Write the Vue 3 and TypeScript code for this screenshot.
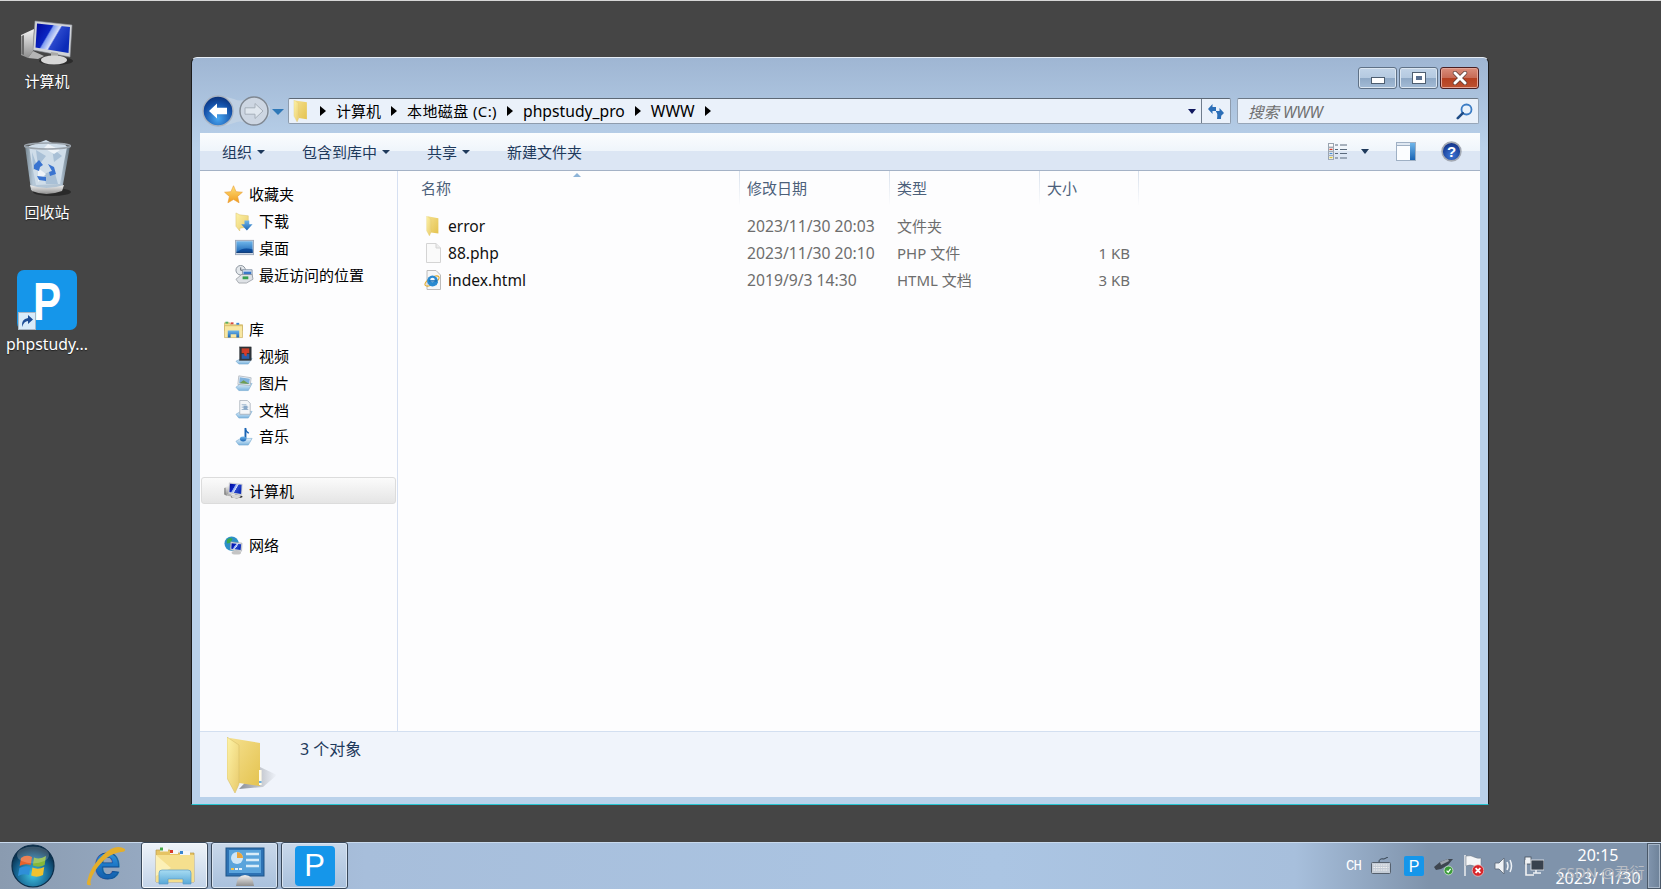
<script setup lang="ts">
interface NavItem { label: string; icon: string; head?: boolean; selected?: boolean }
interface FileRow { name: string; icon: string; date: string; type: string; size: string }
interface Crumb { text: string; kind: string }

const navGroups: NavItem[][] = [
  [
    { label: '收藏夹', icon: 'i-star', head: true },
    { label: '下载', icon: 'i-download' },
    { label: '桌面', icon: 'i-desk' },
    { label: '最近访问的位置', icon: 'i-recent' },
  ],
  [
    { label: '库', icon: 'i-lib', head: true },
    { label: '视频', icon: 'i-video' },
    { label: '图片', icon: 'i-pic' },
    { label: '文档', icon: 'i-doc' },
    { label: '音乐', icon: 'i-music' },
  ],
  [{ label: '计算机', icon: 'i-computer', head: true, selected: true }],
  [{ label: '网络', icon: 'i-net', head: true }],
]

const files: FileRow[] = [
  { name: 'error', icon: 'i-folder', date: '2023/11/30 20:03', type: '文件夹', size: '' },
  { name: '88.php', icon: 'i-file', date: '2023/11/30 20:10', type: 'PHP 文件', size: '1 KB' },
  { name: 'index.html', icon: 'i-html', date: '2019/9/3 14:30', type: 'HTML 文档', size: '3 KB' },
]

const crumbs: Crumb[] = [
  { text: '计算机', kind: '' },
  { text: '本地磁盘 (C:)', kind: 'crumb-mixed' },
  { text: 'phpstudy_pro', kind: 'crumb-latin' },
  { text: 'WWW', kind: 'crumb-latin' },
]
const tools: { label: string; arrow: boolean }[] = [
  { label: '组织', arrow: true },
  { label: '包含到库中', arrow: true },
  { label: '共享', arrow: true },
  { label: '新建文件夹', arrow: false },
]
</script>

<template>
  <div class="screen">
    <svg class="defs" width="0" height="0" aria-hidden="true">
      <defs>
        <linearGradient id="g-leaf" x1="0" y1="0" x2="1" y2="1">
          <stop offset="0" stop-color="#fdf3a8" /><stop offset="1" stop-color="#e9cb6c" />
        </linearGradient>
        <linearGradient id="g-back" x1="0" y1="0" x2="1" y2="1">
          <stop offset="0" stop-color="#f5e08e" /><stop offset="1" stop-color="#e4c350" />
        </linearGradient>
        <linearGradient id="g-shadow" x1="0" y1="0" x2="1" y2="0">
          <stop offset="0" stop-color="#8b8f96" /><stop offset="1" stop-color="#f0f4fb" />
        </linearGradient>
        <linearGradient id="g-screen" x1="0" y1="0" x2="1" y2="0.5">
          <stop offset="0" stop-color="#00069a" /><stop offset="0.42" stop-color="#0a25c2" />
          <stop offset="0.46" stop-color="#7f9cf0" /><stop offset="0.62" stop-color="#d5def8" />
          <stop offset="0.66" stop-color="#2a48cc" /><stop offset="1" stop-color="#0b2bb8" />
        </linearGradient>
        <linearGradient id="g-metal" x1="0" y1="0" x2="0" y2="1">
          <stop offset="0" stop-color="#f2f2f2" /><stop offset="1" stop-color="#8e8e8e" />
        </linearGradient>
        <linearGradient id="g-star" x1="0" y1="0" x2="0" y2="1">
          <stop offset="0" stop-color="#ffe27a" /><stop offset="1" stop-color="#f09a1c" />
        </linearGradient>
        <linearGradient id="g-blue" x1="0" y1="0" x2="0" y2="1">
          <stop offset="0" stop-color="#6fb6ea" /><stop offset="1" stop-color="#1a64b4" />
        </linearGradient>
        <linearGradient id="g-ie" x1="0" y1="0" x2="0" y2="1">
          <stop offset="0" stop-color="#58b6ec" /><stop offset="0.55" stop-color="#1c78c8" />
          <stop offset="1" stop-color="#0e4d96" />
        </linearGradient>
        <linearGradient id="g-base" x1="0" y1="0" x2="0" y2="1">
          <stop offset="0" stop-color="#e4f1fb" /><stop offset="1" stop-color="#7db5df" />
        </linearGradient>
        <linearGradient id="g-glass" x1="0" y1="0" x2="0" y2="1">
          <stop offset="0" stop-color="#a8dcf2" /><stop offset="1" stop-color="#58a8d8" />
        </linearGradient>
        <linearGradient id="g-bin" x1="0" y1="0" x2="1" y2="0">
          <stop offset="0" stop-color="#75858f" /><stop offset="0.18" stop-color="#b6c8d8" />
          <stop offset="0.8" stop-color="#b0c2d2" /><stop offset="1" stop-color="#5f6f7a" />
        </linearGradient>
        <radialGradient id="g-orb" cx="0.5" cy="0.7" r="0.62">
          <stop offset="0" stop-color="#3fc4e4" /><stop offset="0.65" stop-color="#16628f" />
          <stop offset="1" stop-color="#082c48" />
        </radialGradient>
        <radialGradient id="g-back-btn" cx="0.5" cy="0.75" r="0.7">
          <stop offset="0" stop-color="#49a8f2" /><stop offset="0.7" stop-color="#1450a8" />
          <stop offset="1" stop-color="#0c3680" />
        </radialGradient>
        <radialGradient id="g-help" cx="0.5" cy="0.7" r="0.7">
          <stop offset="0" stop-color="#3d78d8" /><stop offset="1" stop-color="#0f2d82" />
        </radialGradient>

        <symbol id="i-folder" viewBox="0 0 36 56">
          <path d="M3 1 L33 6 V49 L12 46Z" fill="url(#g-back)" />
          <path d="M0 0 L12 8 V47 L8 56 L0 41Z" fill="url(#g-leaf)" stroke="#d9bf6a" stroke-width=".6" />
        </symbol>
        <symbol id="i-file" viewBox="0 0 18 20">
          <path d="M2.5 .5 H12 L16.5 5 V19.5 H2.5Z" fill="#fafafa" stroke="#d4d4d4" />
          <path d="M12 .5 V5 H16.5" fill="#ececec" stroke="#d4d4d4" />
        </symbol>
        <symbol id="i-html" viewBox="0 0 18 20">
          <path d="M3 .5 H12 L16.5 5 V19.5 H3Z" fill="#f7f7f7" stroke="#bcbcbc" />
          <ellipse cx="8" cy="11" rx="8" ry="3.4" transform="rotate(-32 8 11)" fill="none" stroke="#e0a92a" stroke-width="1.1" />
          <circle cx="8.5" cy="11" r="5.4" fill="#2a8ad0" />
          <circle cx="8.5" cy="10" r="2.3" fill="#f2f8fd" />
          <rect x="5" y="10.2" width="8" height="1.5" fill="#1a6fb6" />
          <path d="M10 12 H14 L12.4 15.2 H8Z" fill="#2a8ad0" />
        </symbol>
        <symbol id="i-star" viewBox="0 0 20 20">
          <path d="M10 .8 L12.7 7 L19.4 7.6 L14.3 12 L15.9 18.8 L10 15.2 L4.1 18.8 L5.7 12 L.6 7.6 L7.3 7Z" fill="url(#g-star)" stroke="#e89a30" stroke-width=".6" />
        </symbol>
        <symbol id="i-download" viewBox="0 0 20 20">
          <path d="M1 1 L5 3 L14 4 V16 L5 17 L5 20 L1 15Z" fill="url(#g-leaf)" stroke="#d9bf6a" stroke-width=".5" />
          <path d="M10 9 H15 V13 H18.5 L12.5 19.5 L6.5 13 H10Z" fill="url(#g-blue)" />
        </symbol>
        <symbol id="i-desk" viewBox="0 0 20 16">
          <rect x=".5" y=".5" width="19" height="15" fill="#cdd6e2" stroke="#9eaabb" />
          <rect x="1.5" y="1.5" width="17" height="12" fill="url(#g-blue)" />
          <path d="M1.5 13.5 Q8 7 18.5 10 V13.5Z" fill="#0e4d9c" />
          <rect x="1.5" y="12.5" width="17" height="1.2" fill="#123e78" />
        </symbol>
        <symbol id="i-recent" viewBox="0 0 20 20">
          <circle cx="6" cy="5.5" r="5" fill="#e4e8ec" stroke="#8a929c" />
          <path d="M6 2.5 V5.5 H9" fill="none" stroke="#58606a" />
          <path d="M8 5 H18 V14 H8Z" fill="#d8e4f2" stroke="#8a98aa" />
          <path d="M9 7 H17 V12 H9Z" fill="#3a78c8" />
          <path d="M1 15 L7 10 H18 L19 15 L12 19 H4Z" fill="#dfe2e6" stroke="#868c94" stroke-width=".7" />
          <rect x="8" y="12" width="6" height="3" fill="#36a050" />
        </symbol>
        <symbol id="i-lib" viewBox="0 0 20 18">
          <path d="M.5 2 H6 L7 4 H19.5 V10 H.5Z" fill="#f3dd8a" stroke="#c9ad5e" stroke-width=".7" />
          <rect x="1.5" y="0.8" width="3" height="2" fill="#58b060" />
          <rect x="7" y="1.5" width="3" height="2" fill="#d84a3a" />
          <rect x="13" y="2" width="3" height="2" fill="#3a86d0" />
          <path d="M.5 5 H19.5 V17.5 H.5Z" fill="#f8e7a2" stroke="#c9ad5e" stroke-width=".7" />
          <path d="M4 10 H16 V17.5 H13 V14 H7 V17.5 H4Z" fill="url(#g-blue)" />
        </symbol>
        <symbol id="i-video" viewBox="0 0 20 20">
          <path d="M1 16 L7 13 H18 L14 19 H4Z" fill="url(#g-base)" stroke="#6fa6cf" stroke-width=".6" />
          <rect x="5" y="1" width="12" height="14" fill="#30363c" stroke="#1c2024" stroke-width=".5" />
          <rect x="7" y="2.5" width="8" height="5" fill="#c8402a" />
          <rect x="7" y="8.5" width="8" height="5" fill="#2b5da8" />
          <path d="M9 5 L13 4 L12 11 L10 10Z" fill="#d83a28" />
        </symbol>
        <symbol id="i-pic" viewBox="0 0 20 20">
          <path d="M1 15 L6 11 H18 L14 18.5 H4Z" fill="url(#g-base)" stroke="#6fa6cf" stroke-width=".6" />
          <path d="M4 3 L17 5 L16 13 L3 12Z" fill="#eef2f6" stroke="#8f9aa6" stroke-width=".6" />
          <path d="M5 4.5 L15.6 6 L15 11.6 L4.4 10.8Z" fill="#7eb1dc" />
          <path d="M4.6 10.8 L9 7.5 L15 11.6Z" fill="#6f9d54" />
        </symbol>
        <symbol id="i-doc" viewBox="0 0 20 20">
          <path d="M1 15 L6 12 H18 L14 19 H4Z" fill="url(#g-base)" stroke="#6fa6cf" stroke-width=".6" />
          <path d="M5 .5 H13 L16 3.5 V15 H5Z" fill="#f4f6f8" stroke="#98a2ae" stroke-width=".7" />
          <path d="M7 5 H12 M7 7.5 H14 M7 10 H14" stroke="#9ab3cc" />
          <rect x="9" y="6" width="4" height="4" fill="#88a8c8" />
        </symbol>
        <symbol id="i-music" viewBox="0 0 20 20">
          <path d="M1 15 L6 12 H18 L14 19 H4Z" fill="url(#g-base)" stroke="#6fa6cf" stroke-width=".6" />
          <path d="M11 1 V12" stroke="#1a64b4" stroke-width="2" />
          <path d="M11 1 Q12 4 15 6 L14 7 Q12 6 11 4Z" fill="#1a64b4" />
          <ellipse cx="8.6" cy="12.6" rx="3.4" ry="2.6" fill="url(#g-blue)" />
        </symbol>
        <symbol id="i-computer" viewBox="0 0 54 46">
          <ellipse cx="36" cy="41" rx="17" ry="4" fill="#2c2c2c" />
          <path d="M1 15 L14 9 L13 31 L8 38 L1 35Z" fill="url(#g-metal)" />
          <path d="M1.5 16 L4 15 V35 L1.5 34Z" fill="#6a6a6a" />
          <path d="M8 38 L13 31 L24 36 L18 39Z" fill="#b5b5b5" />
          <path d="M15 1 L52 5 L50 37 L13 30Z" fill="#d0d3d8" stroke="#8e9298" stroke-width=".6" />
          <path d="M17 3.5 L50 7 L48.5 33 L15.5 27.5Z" fill="url(#g-screen)" />
          <path d="M31 32 L38 33 L38 36 L31 36Z" fill="#a8a8a8" />
          <ellipse cx="34" cy="40" rx="13" ry="4.6" fill="#d6d6d6" />
        </symbol>
        <symbol id="i-net" viewBox="0 0 20 20">
          <circle cx="8" cy="8" r="7.5" fill="#2c8fc8" />
          <path d="M3 4 Q6 1 9 3 L7 7 L3 8Z M9 10 L13 12 L10 15 L8 13Z" fill="#38a850" />
          <path d="M7 6 L19 7.5 L18.5 16 L6.5 14.5Z" fill="#d8dbe0" stroke="#8e9298" stroke-width=".5" />
          <path d="M8 7.5 L18 8.7 L17.5 14.7 L7.7 13.3Z" fill="url(#g-screen)" />
          <ellipse cx="13" cy="17.5" rx="5" ry="2" fill="#c4c4c4" />
        </symbol>
      </defs>
    </svg>

    <main class="desktop">
      <div class="desk-icon icon-computer">
        <svg class="desk-pic pic-computer"><use href="#i-computer" /></svg>
        <span class="desk-label">计算机</span>
      </div>
      <div class="desk-icon icon-bin">
        <svg class="desk-pic pic-bin" viewBox="0 0 47 57">
          <ellipse cx="28" cy="52" rx="19" ry="4" fill="#2a2a2a" />
          <path d="M1 6 L7 50 Q22 56 38 50 L46 6Z" fill="url(#g-bin)" />
          <path d="M5 6 L14 3 L22 0 L28 3 L40 3 L43 7 L40 22 L36 44 L12 45 L8 25Z" fill="#cfdde9" />
          <path d="M12 10 L22 16 L14 26Z M28 8 L38 16 L30 22Z M20 34 L30 30 L34 44 L22 44Z M8 12 L13 26 L9 30Z" fill="#a9c0d6" />
          <path d="M24 4 L36 10 L30 14 L20 8Z M14 28 L22 34 L14 42Z" fill="#eef3f8" />
          <path d="M10 25 L15 20 L19 25 L16 27 L15 31 L10 29Z M24 24 L30 27 L32 34 L26 36 L25 32 L28 31Z M13 36 L22 37 L22 41 L15 40Z" fill="#3a74d0" />
          <path d="M6 45 Q22 51 40 45 L38 51 Q22 57 8 51Z" fill="url(#g-metal)" />
          <ellipse cx="23.5" cy="6" rx="23" ry="3" fill="none" stroke="#9aa2aa" stroke-width="1.6" />
        </svg>
        <span class="desk-label">回收站</span>
      </div>
      <div class="desk-icon icon-php">
        <div class="p-tile p-large">
          <span>P</span>
          <svg class="shortcut" viewBox="0 0 18 18">
            <rect x=".5" y=".5" width="17" height="17" fill="#d8ecfa" stroke="#a9b8c6" />
            <path d="M4 15 Q3 7 10 6 V3 L15 7.5 L10 12 V9 Q6 9 4 15Z" fill="#1d4e96" />
          </svg>
        </div>
        <span class="desk-label desk-latin">phpstudy...</span>
      </div>

      <section class="window">
        <header class="caption">
          <button class="cap-btn"><i class="glyph-min"></i></button>
          <button class="cap-btn"><i class="glyph-max"></i></button>
          <button class="cap-btn cap-close">
            <svg width="16" height="14" viewBox="0 0 16 14">
              <path d="M3 2 L13 12 M13 2 L3 12" stroke="#5a3a34" stroke-width="4.4" stroke-linecap="round" />
              <path d="M3 2 L13 12 M13 2 L3 12" stroke="#fff" stroke-width="3" stroke-linecap="round" />
            </svg>
          </button>
        </header>

        <div class="addr-row">
          <svg class="nav-btns" viewBox="0 0 88 36">
            <path d="M8 8 Q18 0 34 6 Q40 9 46 6 Q60 0 70 14 V22 Q60 36 46 30 Q40 27 34 30 Q18 36 8 28Z" fill="#c6d4e4" opacity=".75" />
            <circle cx="18" cy="18" r="15" fill="url(#g-back-btn)" stroke="#a9b4c2" stroke-width="1.4" />
            <path d="M9 18 L17 10.5 V14.8 H27 V21.2 H17 V25.5Z" fill="#fff" />
            <circle cx="54" cy="18" r="14" fill="#cdd6e2" stroke="#7f8791" stroke-width="1.4" />
            <path d="M63 18 L55 10.5 V14.8 H45 V21.2 H55 V25.5Z" fill="#dfe6ee" stroke="#a6afba" />
            <path d="M72 16 H84 L78 22Z" fill="#2e78b8" />
          </svg>
          <div class="addr">
            <div class="crumbs">
              <svg class="crumb-folder"><use href="#i-folder" /></svg>
              <template v-for="c in crumbs" :key="c.text">
                <i class="crumb-arrow"></i>
                <span :class="c.kind">{{ c.text }}</span>
              </template>
              <i class="crumb-arrow"></i>
            </div>
            <i class="addr-drop"></i>
            <div class="addr-refresh">
              <svg width="18" height="17" viewBox="0 0 18 17">
                <path d="M1 6 L5.5 1 L5.5 4 H9 V8 H5.5 V11Z" fill="#2c6fb8" />
                <path d="M17 10 L12.5 5 V8 H9 V9 Q11 10 10 16 H14 Q14 12 15 12Z" fill="#2c6fb8" />
              </svg>
            </div>
          </div>
          <div class="search">
            <span class="search-text">搜索 WWW</span>
            <svg width="17" height="17" viewBox="0 0 17 17">
              <circle cx="10.5" cy="6.5" r="5" fill="#eaf2fb" stroke="#3b7cc4" stroke-width="1.8" />
              <path d="M6.8 10.2 L1.8 15.2" stroke="#1f4c86" stroke-width="2.6" stroke-linecap="round" />
            </svg>
          </div>
        </div>

        <div class="toolbar">
          <div v-for="t in tools" :key="t.label" class="tool">
            <span>{{ t.label }}</span>
            <i v-if="t.arrow" class="tool-arrow"></i>
          </div>
          <div class="tool-right">
            <svg class="tool-view" width="20" height="17" viewBox="0 0 20 17">
              <rect x=".5" y=".5" width="5" height="3.6" fill="#fbfbfb" stroke="#9aa4b0" />
              <rect x=".5" y="4.6" width="5" height="3.6" fill="#fbfbfb" stroke="#9aa4b0" />
              <rect x="1.5" y="5.8" width="3" height="1.2" fill="#d83a2a" />
              <rect x=".5" y="8.7" width="5" height="3.6" fill="#fbfbfb" stroke="#9aa4b0" />
              <rect x="1.5" y="9.9" width="3" height="1.2" fill="#4a90d8" />
              <rect x=".5" y="12.8" width="5" height="3.6" fill="#fbfbfb" stroke="#9aa4b0" />
              <rect x="1.5" y="14" width="3" height="1.2" fill="#d8c83a" />
              <path d="M7 2 H10 M12 2 H19 M7 6.5 H10 M12 6.5 H19 M7 10.5 H10 M12 10.5 H19 M7 15 H10 M12 15 H19" stroke="#5a6a7c" />
            </svg>
            <i class="tool-arrow view-arrow"></i>
            <svg class="tool-pane" width="20" height="19" viewBox="0 0 20 19">
              <rect x=".5" y=".5" width="19" height="18" fill="#fbfdff" stroke="#9fb0c4" />
              <rect x=".5" y=".5" width="19" height="3" fill="#dfe8f2" stroke="#9fb0c4" />
              <rect x="14" y="1" width="5" height="17" fill="url(#g-blue)" />
            </svg>
            <svg class="tool-help" width="21" height="21" viewBox="0 0 21 21">
              <circle cx="10.5" cy="10.5" r="9.4" fill="url(#g-help)" stroke="#a3a9b3" stroke-width="1.6" />
              <text x="10.5" y="16" text-anchor="middle" class="help-q">?</text>
            </svg>
          </div>
        </div>

        <div class="panes">
          <aside class="nav">
            <div v-for="(g, i) in navGroups" :key="i" class="nav-group">
              <div
                v-for="n in g"
                :key="n.label"
                class="nav-row"
                :class="{ 'nav-head': n.head, 'nav-sel': n.selected }"
              >
                <svg class="nav-ico"><use :href="'#' + n.icon" /></svg>
                <span>{{ n.label }}</span>
              </div>
            </div>
          </aside>
          <div class="list">
            <i class="sort-arrow"></i>
            <div class="list-head">
              <div class="h-name">名称</div>
              <div class="h-cell">修改日期</div>
              <div class="h-cell">类型</div>
              <div class="h-cell h-last">大小</div>
            </div>
            <div v-for="f in files" :key="f.name" class="file-row">
              <div class="f-name">
                <svg class="f-ico"><use :href="'#' + f.icon" /></svg>
                <span>{{ f.name }}</span>
              </div>
              <div class="f-cell f-date">{{ f.date }}</div>
              <div class="f-cell">{{ f.type }}</div>
              <div class="f-size">{{ f.size }}</div>
            </div>
          </div>
        </div>

        <footer class="details">
          <svg class="detail-pic" viewBox="0 0 52 56">
            <path d="M33 30 L50 38 L36 50 L12 52Z" fill="url(#g-shadow)" />
            <use href="#i-folder" width="36" height="56" />
            <rect x="32" y="33" width="2.6" height="15" fill="#fffbe8" />
            <rect x="32" y="44" width="2.6" height="2" fill="#6fb0e0" />
          </svg>
          <span class="detail-text">3 个对象</span>
        </footer>
      </section>
    </main>

    <nav class="taskbar">
      <div class="start">
        <svg width="44" height="44" viewBox="0 0 44 44">
          <circle cx="22" cy="22" r="21" fill="url(#g-orb)" stroke="#0a2c48" stroke-width="1.2" />
          <path d="M10 14 Q15 10 21 13 L19.6 21 Q14 19 8.6 22Z" fill="#e8622a" />
          <path d="M23 13.5 Q29 16 35 12 L33.6 21 Q28 24 21.8 21.5Z" fill="#86b83a" />
          <path d="M8.4 24 Q14 21 19.2 23 L18 31 Q12 29 7 32Z" fill="#2f8fd8" />
          <path d="M21.4 23.5 Q27 26 33.2 23 L32 31 Q26 34 20.2 31.5Z" fill="#f0c22e" />
          <ellipse cx="22" cy="11" rx="16" ry="8.5" fill="#fff" opacity=".2" />
        </svg>
      </div>
      <div class="pin-ie">
        <svg class="ie-svg" viewBox="0 0 40 42">
          <text x="21" y="34" text-anchor="middle" class="ie-e">e</text>
          <path d="M39 4 Q30 -2 18 9 Q4 21 1 37 Q0 41 5 40 Q3 36 9 26 Q20 9 35 7 Q40 7 39 4Z" fill="#e3ae2c" />
        </svg>
      </div>
      <div class="task-btn task-active">
        <svg width="40" height="40" viewBox="0 0 40 40">
          <path d="M1 4 H15 L17 7 H39 V36 H1Z" fill="#e6c464" stroke="#b89a48" stroke-width=".7" />
          <rect x="5" y="1.5" width="8" height="4" fill="#f6f6f6" />
          <rect x="5" y="1.5" width="3" height="3" fill="#44a848" />
          <rect x="15" y="4" width="8" height="4" fill="#f6f6f6" />
          <rect x="15" y="4" width="3" height="3" fill="#d83a2a" />
          <rect x="25" y="5" width="10" height="4" fill="#f6f6f6" />
          <rect x="25" y="5" width="3" height="3" fill="#3a86d0" />
          <path d="M1 9 H39 V36 H1Z" fill="#f5df8e" />
          <path d="M1 9 L16 22 L1 30Z" fill="#fff6c8" opacity=".7" />
          <path d="M4 38 V27 Q4 24 7 24 H33 Q36 24 36 27 V38 H28 V33 H13 V38Z" fill="url(#g-glass)" stroke="#5a9bc8" stroke-width=".7" />
        </svg>
      </div>
      <div class="task-btn">
        <svg width="42" height="42" viewBox="0 0 42 42">
          <rect x="2" y="3" width="38" height="28" fill="#2d72b4" stroke="#1f5488" />
          <rect x="5" y="5" width="32" height="23" fill="#5aa4dc" />
          <circle cx="13" cy="13" r="6" fill="#cfe6f6" />
          <path d="M13 13 V7 A6 6 0 0 1 19 13Z" fill="#eba53c" />
          <path d="M22 9 H35 M22 15 H35 M22 21 H35" stroke="#d8ecf8" stroke-width="2.6" />
          <rect x="7" y="23" width="3" height="2" fill="#f4c24c" />
          <rect x="11" y="23" width="3" height="2" fill="#e6f2fa" />
          <rect x="15" y="23" width="3" height="2" fill="#e6f2fa" />
          <path d="M12 41 Q13 30 21 30 Q29 30 30 41Z" fill="url(#g-metal)" />
        </svg>
      </div>
      <div class="task-btn">
        <div class="p-tile p-task"><span>P</span></div>
      </div>

      <div class="tray">
        <span class="tray-ch">CH</span>
        <svg class="tray-kb" width="20" height="18" viewBox="0 0 20 18">
          <path d="M8 5 Q8 1 13 2 L17 0" fill="none" stroke="#33404e" />
          <rect x=".5" y="5.5" width="19" height="11" rx="1" fill="#c4ccd6" stroke="#56616e" />
          <path d="M2.5 8 H17.5 M2.5 10.5 H17.5 M2.5 13 H17.5" stroke="#f2f2f2" stroke-dasharray="1.6 .8" />
        </svg>
        <div class="p-tile p-tray"><span>P</span></div>
        <svg width="20" height="20" viewBox="0 0 20 20">
          <path d="M0 11 L6 6 L14 3 L19 3 L14 9 L7 13 L2 14Z" fill="#3e4650" />
          <path d="M6 6 L14 3 L15 5 L7 9Z" fill="#9aa2ac" />
          <circle cx="14.5" cy="14.5" r="4.4" fill="#3a9c3a" stroke="#e0ecd8" stroke-width=".7" />
          <path d="M12.6 14.6 L14.2 16.2 L16.6 12.8" fill="none" stroke="#fff" stroke-width="1.2" />
        </svg>
        <svg width="20" height="22" viewBox="0 0 20 22">
          <path d="M1 0 V21" stroke="#f4f4f4" stroke-width="1.4" />
          <path d="M2 1 Q7 0 10 2 Q14 4 17 3 V12 Q13 13 10 11 Q6 9 2 11Z" fill="#f4f6f8" stroke="#68727e" stroke-width=".5" />
          <circle cx="14" cy="15.5" r="5.8" fill="#d8252a" stroke="#f2c8c8" stroke-width=".7" />
          <path d="M11.6 13.1 L16.4 17.9 M16.4 13.1 L11.6 17.9" stroke="#fff" stroke-width="1.8" />
        </svg>
        <svg width="20" height="20" viewBox="0 0 20 20">
          <path d="M1 7 H5 L10 2 V18 L5 13 H1Z" fill="#eef2f6" stroke="#5a6674" stroke-width=".8" />
          <path d="M13 6 Q15 10 13 14 M16 4 Q19 10 16 16" fill="none" stroke="#eef2f6" stroke-width="1.5" />
        </svg>
        <svg width="20" height="20" viewBox="0 0 20 20">
          <rect x="1" y="1" width="6" height="7" fill="#eef2f6" stroke="#46505c" stroke-width=".8" />
          <path d="M2 4 V19 H10" fill="none" stroke="#f2f2f2" stroke-width="1.6" />
          <rect x="7" y="4" width="13" height="10" fill="#39424e" stroke="#e8ecf0" stroke-width=".8" />
          <path d="M12 14 V17 H9 H17" stroke="#eef2f6" stroke-width="1.6" fill="none" />
        </svg>
        <div class="clock">
          <span>20:15</span>
          <span>2023/11/30</span>
          <em class="mark">CSDN @君衍</em>
        </div>
        <div class="show-desk"></div>
      </div>
    </nav>
  </div>
</template>

<style>
html, body { margin: 0; background: #454545; }
</style>

<style scoped>
.screen {
  width: 1661px;
  height: 889px;
  display: flex;
  flex-direction: column;
  overflow: hidden;
  font-family: "Noto Sans", "Noto Sans CJK SC", sans-serif;
  font-size: 15px;
  color: #000;
}
.defs { position: absolute; }
.desktop {
  position: relative;
  flex: 1;
  background: #454545;
  border-top: 1px solid #d6d6d6;
}
.desk-icon {
  position: absolute;
  left: 0;
  width: 94px;
  display: flex;
  flex-direction: column;
  align-items: center;
}
.icon-computer { top: 19px; }
.icon-bin { top: 139px; }
.icon-php { top: 269px; }
.desk-pic { display: block; }
.pic-computer { width: 54px; height: 46px; }
.pic-bin { width: 47px; height: 57px; }
.desk-label {
  color: #fff;
  line-height: 20px;
  margin-top: 5px;
  text-shadow: 0 1px 1px #222;
}
.icon-php .desk-label { margin-top: 4px; }
.desk-latin { font-size: 15.8px; }
.p-tile {
  position: relative;
  background: #1596ea;
  color: #fff;
  font-family: "Liberation Sans", sans-serif;
  display: flex;
  align-items: center;
  justify-content: center;
}
.p-tile span { display: block; }
.p-large { width: 60px; height: 60px; border-radius: 7px; font-size: 54px; line-height: 56px; font-weight: 700; }
.p-large span { margin-top: 1px; transform: scaleX(0.78); }
.shortcut { position: absolute; left: 1px; bottom: 0; width: 18px; height: 18px; }
.p-task { width: 40px; height: 40px; border-radius: 4px; font-size: 31px; line-height: 36px; }
.p-tray { width: 20px; height: 20px; border-radius: 2px; font-size: 16px; line-height: 17px; margin-left: 2px; }

.window {
  position: absolute;
  left: 191px;
  top: 56px;
  width: 1298px;
  height: 748px;
  box-sizing: border-box;
  display: flex;
  flex-direction: column;
  padding: 0 8px 7px;
  border: 1px solid #1c1c1c;
  border-top-color: #e6edf5;
  border-bottom-color: #25c4cf;
  border-radius: 6px 6px 0 0;
  background: linear-gradient(#9fb6d3, #b9d1ea 90px);
}
.caption {
  height: 40px;
  flex: none;
  display: flex;
  justify-content: flex-end;
  align-items: flex-start;
  gap: 2px;
  padding: 9px 1px 0 0;
  box-sizing: border-box;
}
.cap-btn {
  width: 39px;
  height: 22px;
  padding: 0;
  box-sizing: border-box;
  display: flex;
  align-items: center;
  justify-content: center;
  border: 1px solid #5f7186;
  border-radius: 3px;
  background: linear-gradient(#c2d4e8 0, #b4c9e0 50%, #8fa9c6 52%, #a4bcd6 100%);
  box-shadow: inset 0 0 0 1px #dbe6f1;
}
.cap-close {
  border-color: #4a1f22;
  background: linear-gradient(#da8e7c 0, #c76a55 50%, #b54021 52%, #bd5231 100%);
  box-shadow: inset 0 0 0 1px #e4a597;
}
.glyph-min {
  display: block;
  width: 12px;
  height: 5px;
  margin-top: 5px;
  background: #fff;
  border: 1px solid #4e5e70;
}
.glyph-max {
  display: block;
  width: 12px;
  height: 10px;
  background: #5a7090;
  border: 3px solid #fff;
  outline: 1px solid #4e5e70;
  box-sizing: border-box;
}

.addr-row {
  height: 26px;
  flex: none;
  display: flex;
  gap: 6px;
  padding-right: 1px;
}
.nav-btns { width: 88px; height: 36px; margin: -5px -6px -5px 0; flex: none; }
.addr {
  flex: 1;
  display: flex;
  align-items: center;
  box-sizing: border-box;
  border: 1px solid #8e9cad;
  border-top-color: #5d6875;
  border-radius: 2px;
  background: #eaf1fa;
  min-width: 0;
}
.crumbs { flex: 1; display: flex; align-items: center; gap: 10px; padding-left: 3px; line-height: 20px; white-space: nowrap; }
.crumb-folder { width: 18px; height: 22px; }
.crumb-latin { font-size: 15.7px; }
.crumb-mixed { letter-spacing: .4px; }
.crumb-arrow {
  width: 0;
  height: 0;
  border-left: 6px solid #000;
  border-top: 5px solid transparent;
  border-bottom: 5px solid transparent;
}
.addr-drop {
  width: 0;
  height: 0;
  margin-right: 5px;
  border-top: 5px solid #10185e;
  border-left: 4.5px solid transparent;
  border-right: 4.5px solid transparent;
}
.addr-refresh {
  width: 28px;
  height: 100%;
  display: flex;
  align-items: center;
  justify-content: center;
  border-left: 1px solid #6f7c8c;
}
.search {
  width: 242px;
  flex: none;
  box-sizing: border-box;
  display: flex;
  align-items: center;
  justify-content: space-between;
  padding: 0 5px 0 10px;
  border: 1px solid #97a6b8;
  border-top-color: #6c7886;
  border-radius: 2px;
  background: #eaf1fa;
}
.search-text { color: #6e6e6e; font-style: italic; font-size: 15.5px; }

.toolbar {
  height: 38px;
  flex: none;
  margin-top: 9px;
  box-sizing: border-box;
  display: flex;
  align-items: center;
  gap: 37px;
  padding-left: 22px;
  border-bottom: 1px solid #a4b2c6;
  background: linear-gradient(#fbfdfe 0, #eff5fb 48%, #dce6f4 50%, #dce6f4 100%);
  color: #1e395b;
}
.tool { display: flex; align-items: center; gap: 5px; line-height: 20px; }
.tool-arrow {
  display: block;
  width: 0;
  height: 0;
  border-top: 4px solid #1e395b;
  border-left: 4px solid transparent;
  border-right: 4px solid transparent;
}
.tool-right { margin-left: auto; display: flex; align-items: center; padding-right: 18px; }
.view-arrow { margin-left: 13px; border-top-width: 5px; }
.tool-pane { margin-left: 27px; }
.tool-help { margin-left: 25px; }
.help-q { font: 700 15px "Liberation Sans", sans-serif; fill: #fff; }

.panes { flex: 1; display: flex; min-height: 0; background: #fdfdfe; }
.nav {
  width: 198px;
  flex: none;
  box-sizing: border-box;
  padding: 10px 1px 0 1px;
  border-right: 1px solid #d6e0f2;
}
.nav-group + .nav-group { margin-top: 27.6px; }
.nav-row {
  height: 26.8px;
  box-sizing: border-box;
  display: flex;
  align-items: center;
  gap: 5px;
  padding-left: 34px;
  line-height: 20px;
  white-space: nowrap;
}
.nav-head { padding-left: 23px; gap: 6px; }
.nav-sel {
  border: 1px solid #dcdcdc;
  border-radius: 3px;
  padding-left: 22px;
  background: linear-gradient(#fbfbfb, #e5e5e5);
}
.nav-ico { width: 19px; height: 19px; flex: none; }

.list { position: relative; flex: 1; min-width: 0; }
.sort-arrow {
  position: absolute;
  left: 175px;
  top: 2px;
  width: 0;
  height: 0;
  border-bottom: 4px solid #8db4d8;
  border-left: 4.5px solid transparent;
  border-right: 4.5px solid transparent;
}
.list-head, .file-row { display: grid; grid-template-columns: 341px 150px 150px 100px; }
.list-head { height: 30px; margin-bottom: 11px; color: #4c607a; line-height: 34px; }
.h-name { padding-left: 23px; }
.h-cell {
  padding-left: 7px;
  border-left: 1px solid;
  border-image: linear-gradient(#d6dfeb, #ffffff00) 1;
}
.h-last { border-right: 1px solid; }
.file-row { height: 27.2px; align-items: center; line-height: 20px; color: #6d6d6d; white-space: nowrap; }
.f-name { display: flex; align-items: center; gap: 6px; padding-left: 26px; color: #111; font-size: 15.6px; }
.f-ico { width: 18px; height: 20px; flex: none; }
.f-cell { padding-left: 8px; }
.f-date { font-size: 15.7px; }
.f-size { text-align: right; padding-right: 9px; }

.details {
  height: 66px;
  flex: none;
  box-sizing: border-box;
  display: flex;
  align-items: flex-start;
  padding: 5px 0 0 27px;
  border-top: 1px solid #d3dff0;
  background: #f0f4fb;
}
.detail-pic { width: 52px; height: 56px; flex: none; }
.detail-text { margin-left: 21px; margin-top: 1px; color: #1e395b; font-size: 16px; line-height: 22px; }

.taskbar {
  height: 47px;
  flex: none;
  box-sizing: border-box;
  display: flex;
  align-items: center;
  border-top: 1px solid #c8d9ec;
  background: linear-gradient(90deg, #8a9bb0 0, #a7bedb 22%, #abc5e3 60%, #a7bfdc 78%, #7f93ab 86%, #7f93ab 100%);
}
.start { width: 66px; display: flex; justify-content: center; flex: none; }
.pin-ie { width: 75px; display: flex; justify-content: center; padding-left: 4px; box-sizing: border-box; flex: none; }
.ie-svg { width: 40px; height: 42px; overflow: visible; }
.task-btn {
  width: 67px;
  height: 47px;
  margin-right: 3px;
  margin-top: -1px;
  flex: none;
  box-sizing: border-box;
  display: flex;
  align-items: center;
  justify-content: center;
  border: 1px solid #39485a;
  border-radius: 3px;
  background: linear-gradient(#c9d8ea, #a9c1dd);
  box-shadow: inset 0 0 0 1px #d9e5f2;
}
.task-active { background: linear-gradient(#eef3f9, #c2d3e8); box-shadow: inset 0 0 0 1px #f4f8fc; }
.tray { margin-left: auto; display: flex; align-items: center; gap: 10px; height: 100%; color: #fff; }
.tray-ch { font: 14px/20px "Liberation Mono", monospace; width: 16px; margin-right: -1px; letter-spacing: -1px; }
.tray-kb { margin-right: 1px; }
.clock {
  position: relative;
  width: 98px;
  margin-left: -5px;
  height: 100%;
  display: flex;
  flex-direction: column;
  align-items: center;
  justify-content: center;
  font-size: 16px;
  line-height: 23px;
  overflow: hidden;
  white-space: nowrap;
}
.clock span:first-child { margin-top: 1px; }
.mark {
  position: absolute;
  left: 8px;
  top: 19px;
  font-style: normal;
  font-size: 15px;
  line-height: 20px;
  color: #b9bdc4;
}
.show-desk {
  width: 14px;
  height: 100%;
  margin-left: -10px;
  box-sizing: border-box;
  border: 1px solid #4a5868;
  background: linear-gradient(90deg, #8195ae, #6e8299);
  box-shadow: inset 0 0 0 1px #a5b4c6;
}
.ie-e { font: 700 48px "Liberation Sans", sans-serif; fill: url(#g-ie); stroke: #0e4f94; stroke-width: .8; }
</style>
